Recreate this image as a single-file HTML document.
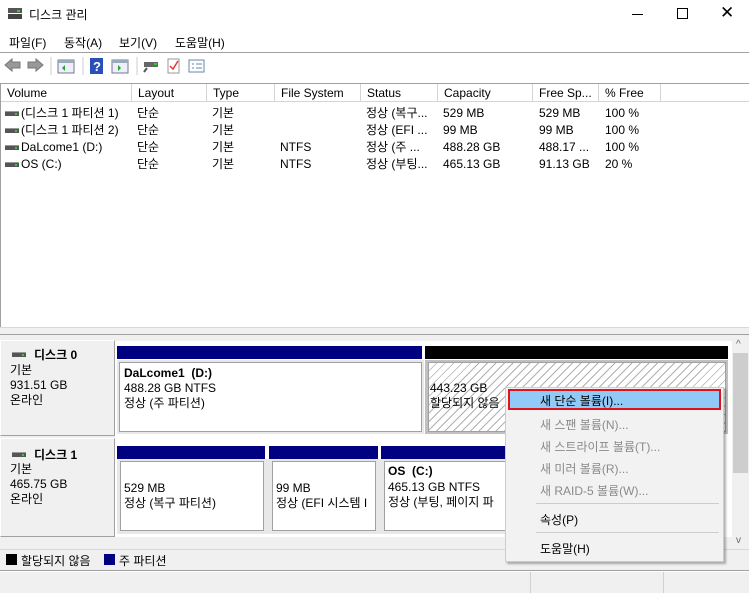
<!DOCTYPE html>
<html><head><meta charset="utf-8"><style>
*{margin:0;padding:0;box-sizing:border-box}
body{width:749px;height:593px;overflow:hidden;background:#fff;font-family:"Liberation Sans","Noto Sans CJK KR",sans-serif;font-size:12px;color:#000;position:relative}
.a{position:absolute;white-space:nowrap}
.hd{position:absolute;top:84px;height:18px;border-right:1px solid #d5d5d5;border-bottom:1px solid #d5d5d5;padding:2px 0 0 6px;background:#fff}
.hd:first-child{}
.dr{position:absolute;width:14px;height:5px;background:#555;border-top:1px solid #999}
.dr:after{content:"";position:absolute;right:2px;top:1px;width:2px;height:2px;background:#3c3}
.mi{position:absolute;left:540px;font-size:12px;color:#8a8a8a}
.pb{position:absolute;background:#fff;border:1px solid #a0a0a0;box-shadow:inset 1px 1px 0 #fff}
</style></head><body>
<!-- title -->
<svg class="a" style="left:7px;top:7px" width="16" height="14"><rect x="1" y="1" width="14" height="5" fill="#555"/><rect x="1" y="7" width="14" height="5" fill="#444"/><rect x="10" y="3" width="3" height="2" fill="#3c3"/></svg>
<div class="a" style="left:29px;top:6px;font-size:12px">디스크 관리</div>
<div class="a" style="left:632px;top:14px;width:11px;height:1px;background:#000"></div>
<div class="a" style="left:677px;top:8px;width:11px;height:11px;border:1px solid #000"></div>
<div class="a" style="left:720px;top:3px;font-size:17px;font-weight:300">✕</div>
<!-- menu -->
<div class="a" style="left:9px;top:34px">파일(F)</div>
<div class="a" style="left:64px;top:34px">동작(A)</div>
<div class="a" style="left:119px;top:34px">보기(V)</div>
<div class="a" style="left:175px;top:34px">도움말(H)</div>
<div class="a" style="left:0;top:52px;width:749px;height:1px;background:#a0a0a0"></div>
<!-- toolbar -->
<svg class="a" style="left:3px;top:57px" width="210" height="18">
<path d="M2 8 L9 2 V5 H17 V11 H9 V14 Z" fill="#999" stroke="#777"/>
<path d="M40 8 L33 2 V5 H25 V11 H33 V14 Z" fill="#999" stroke="#777"/>
<line x1="48" y1="0" x2="48" y2="18" stroke="#ccc"/>
<rect x="55" y="3" width="16" height="13" fill="#eef" stroke="#778"/><rect x="55" y="3" width="16" height="3" fill="#9ab"/><path d="M62 8 l-3 3 3 3z" fill="#2a2"/>
<line x1="80" y1="0" x2="80" y2="18" stroke="#ccc"/>
<rect x="87" y="1" width="13" height="16" fill="#2a4fb8"/><text x="90" y="14" fill="#fff" font-size="13" font-weight="bold">?</text>
<rect x="109" y="3" width="16" height="13" fill="#eef" stroke="#778"/><rect x="109" y="3" width="16" height="3" fill="#9ab"/><path d="M115 8 l3 3 -3 3z" fill="#2a2"/>
<line x1="134" y1="0" x2="134" y2="18" stroke="#ccc"/>
<rect x="141" y="5" width="14" height="5" fill="#666"/><rect x="151" y="6" width="3" height="2" fill="#3c3"/><path d="M144 11 l-3 4" stroke="#555" stroke-width="2"/>
<rect x="165" y="2" width="11" height="14" fill="#fff" stroke="#999"/><path d="M167 9 l3 3 5-8" stroke="#e33" fill="none" stroke-width="1.5"/>
<rect x="186" y="3" width="15" height="12" fill="#fff" stroke="#68a"/><path d="M189 7h2M189 11h2M193 7h6M193 11h6" stroke="#68a"/>
</svg>
<!-- list -->
<div class="a" style="left:0;top:83px;width:749px;height:1px;background:#a0a0a0"></div>
<div class="a" style="left:0;top:83px;width:1px;height:245px;background:#a0a0a0"></div>
<div class="hd" style="left:1px;width:131px">Volume</div>
<div class="hd" style="left:132px;width:75px">Layout</div>
<div class="hd" style="left:207px;width:68px">Type</div>
<div class="hd" style="left:275px;width:86px">File System</div>
<div class="hd" style="left:361px;width:77px">Status</div>
<div class="hd" style="left:438px;width:95px">Capacity</div>
<div class="hd" style="left:533px;width:66px">Free Sp...</div>
<div class="hd" style="left:599px;width:62px">% Free</div>
<div class="hd" style="left:661px;width:88px;border-right:0"></div>
<div class="dr" style="left:5px;top:111px"></div><div class="dr" style="left:5px;top:128px"></div><div class="dr" style="left:5px;top:145px"></div><div class="dr" style="left:5px;top:162px"></div>
<div class="a" style="left:21px;top:105px;line-height:17px">(디스크 1 파티션 1)<br>(디스크 1 파티션 2)<br>DaLcome1 (D:)<br>OS (C:)</div>
<div class="a" style="left:137px;top:105px;line-height:17px">단순<br>단순<br>단순<br>단순</div>
<div class="a" style="left:212px;top:105px;line-height:17px">기본<br>기본<br>기본<br>기본</div>
<div class="a" style="left:280px;top:105px;line-height:17px"><br><br>NTFS<br>NTFS</div>
<div class="a" style="left:366px;top:105px;line-height:17px">정상 (복구...<br>정상 (EFI ...<br>정상 (주 ...<br>정상 (부팅...</div>
<div class="a" style="left:443px;top:105px;line-height:17px">529 MB<br>99 MB<br>488.28 GB<br>465.13 GB</div>
<div class="a" style="left:539px;top:105px;line-height:17px">529 MB<br>99 MB<br>488.17 ...<br>91.13 GB</div>
<div class="a" style="left:605px;top:105px;line-height:17px">100 %<br>100 %<br>100 %<br>20 %</div>
<!-- splitter -->
<div class="a" style="left:0;top:327px;width:749px;height:8px;background:#f0f0f0;border-top:1px solid #d8d8d8;border-bottom:1px solid #a0a0a0"></div>
<!-- lower pane -->
<div class="a" style="left:0;top:335px;width:749px;height:235px;background:#f0f0f0"></div>
<div class="a" style="left:115px;top:341px;width:617px;height:196px;background:#fff"></div>
<div class="a" style="left:0;top:340px;width:115px;height:96px;background:#f0f0f0;border:1px solid #fff;border-right-color:#a0a0a0;border-bottom-color:#a0a0a0"></div>
<div class="a" style="left:0;top:438px;width:115px;height:99px;background:#f0f0f0;border:1px solid #fff;border-right-color:#a0a0a0;border-bottom-color:#a0a0a0"></div>
<div class="dr" style="left:12px;top:352px"></div>
<div class="a" style="left:34px;top:346px;font-weight:bold">디스크 0</div>
<div class="a" style="left:10px;top:363px;line-height:15px">기본<br>931.51 GB<br>온라인</div>
<div class="dr" style="left:12px;top:452px"></div>
<div class="a" style="left:34px;top:446px;font-weight:bold">디스크 1</div>
<div class="a" style="left:10px;top:462px;line-height:15px">기본<br>465.75 GB<br>온라인</div>
<!-- disk0 partitions -->
<div class="a" style="left:117px;top:346px;width:305px;height:13px;background:#000080"></div>
<div class="a" style="left:425px;top:346px;width:303px;height:13px;background:#000"></div>
<div class="a" style="left:117px;top:360px;width:307px;height:74px;background:#e8e8e8"></div>
<div class="pb" style="left:119px;top:362px;width:303px;height:70px"></div>
<div class="a" style="left:124px;top:366px;font-weight:bold">DaLcome1&nbsp; (D:)</div>
<div class="a" style="left:124px;top:381px;line-height:15px">488.28 GB NTFS<br>정상 (주 파티션)</div>
<div class="a" style="left:425px;top:360px;width:303px;height:74px;background:#c0c0c0"></div>
<div class="a" style="left:428px;top:362px;width:298px;height:70px;background:repeating-linear-gradient(135deg,#fff 0 5px,#b0b0b0 5px 6px);border:1px solid #a0a0a0"></div>
<div class="a" style="left:430px;top:381px;line-height:15px">443.23 GB<br>할당되지 않음</div>
<!-- disk1 partitions -->
<div class="a" style="left:117px;top:446px;width:148px;height:13px;background:#000080"></div>
<div class="a" style="left:269px;top:446px;width:109px;height:13px;background:#000080"></div>
<div class="a" style="left:381px;top:446px;width:125px;height:13px;background:#000080"></div>
<div class="a" style="left:117px;top:459px;width:390px;height:75px;background:#e8e8e8"></div>
<div class="pb" style="left:120px;top:461px;width:144px;height:70px"></div>
<div class="pb" style="left:272px;top:461px;width:104px;height:70px"></div>
<div class="pb" style="left:384px;top:461px;width:123px;height:70px"></div>
<div class="a" style="left:124px;top:481px;line-height:15px">529 MB<br>정상 (복구 파티션)</div>
<div class="a" style="left:276px;top:481px;line-height:15px;width:98px;overflow:hidden">99 MB<br>정상 (EFI 시스템 I</div>
<div class="a" style="left:388px;top:464px;font-weight:bold">OS&nbsp; (C:)</div>
<div class="a" style="left:388px;top:480px;line-height:15px">465.13 GB NTFS<br>정상 (부팅, 페이지 파</div>
<!-- scrollbar -->
<div class="a" style="left:732px;top:337px;width:17px;height:213px;background:#f0f0f0"></div>
<div class="a" style="left:736px;top:339px;font-size:10px;color:#666">^</div>
<div class="a" style="left:733px;top:353px;width:15px;height:120px;background:#cdcdcd"></div>
<div class="a" style="left:736px;top:535px;font-size:10px;color:#666">v</div>
<!-- legend -->
<div class="a" style="left:0;top:549px;width:749px;height:1px;background:#d8d8d8"></div>
<div class="a" style="left:6px;top:554px;width:11px;height:11px;background:#000"></div>
<div class="a" style="left:21px;top:552px">할당되지 않음</div>
<div class="a" style="left:104px;top:554px;width:11px;height:11px;background:#000080"></div>
<div class="a" style="left:119px;top:552px">주 파티션</div>
<div class="a" style="left:0;top:570px;width:749px;height:1px;background:#a0a0a0"></div>
<div class="a" style="left:0;top:571px;width:749px;height:22px;background:#f0f0f0;border-top:1px solid #fff"></div>
<div class="a" style="left:530px;top:572px;width:1px;height:21px;background:#d0d0d0"></div>
<div class="a" style="left:663px;top:572px;width:1px;height:21px;background:#d0d0d0"></div>
<!-- context menu -->
<div class="a" style="left:505px;top:387px;width:219px;height:175px;background:#f2f2f2;border:1px solid #ccc;box-shadow:2px 2px 2px rgba(0,0,0,.3)"></div>
<div class="a" style="left:508px;top:389px;width:213px;height:21px;background:#91c9f7;border:2px solid #e0121c"></div>
<div class="mi" style="top:392px;color:#000">새 단순 볼륨(I)...</div>
<div class="mi" style="top:416px">새 스팬 볼륨(N)...</div>
<div class="mi" style="top:438px">새 스트라이프 볼륨(T)...</div>
<div class="mi" style="top:460px">새 미러 볼륨(R)...</div>
<div class="mi" style="top:482px">새 RAID-5 볼륨(W)...</div>
<div class="a" style="left:536px;top:503px;width:183px;height:1px;background:#ccc"></div>
<div class="mi" style="top:511px;color:#000">속성(P)</div>
<div class="a" style="left:536px;top:532px;width:183px;height:1px;background:#ccc"></div>
<div class="mi" style="top:540px;color:#000">도움말(H)</div>
</body></html>
